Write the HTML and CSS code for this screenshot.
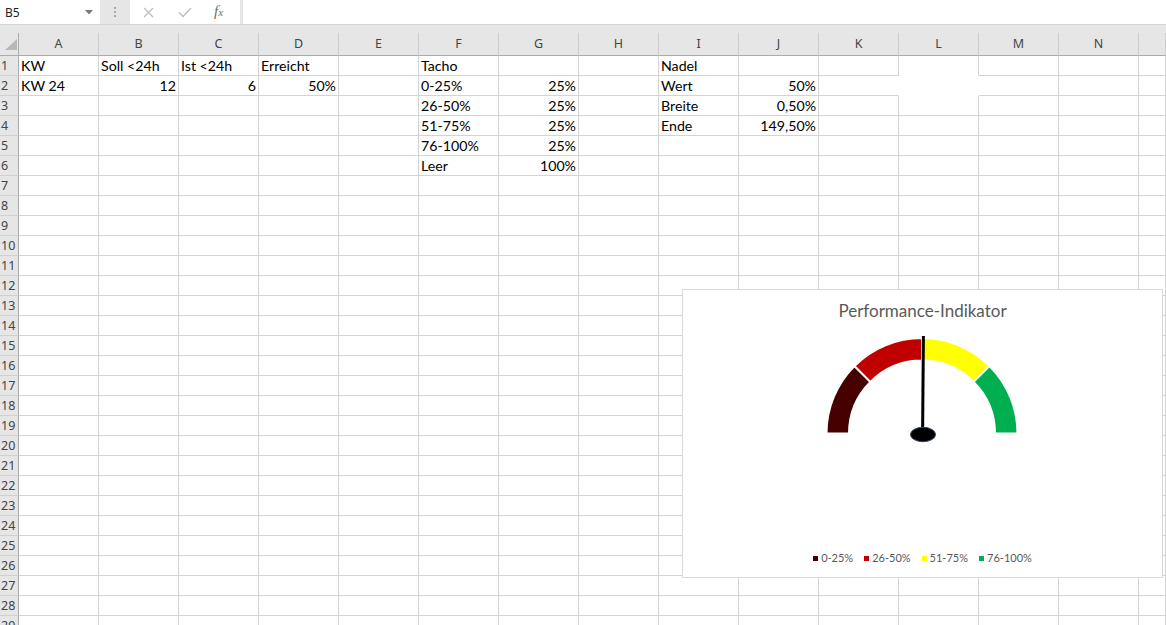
FILE: index.html
```html
<!DOCTYPE html>
<html lang="de">
<head>
<meta charset="utf-8">
<title>Performance-Indikator</title>
<link rel="stylesheet" href="styles.css">
</head>
<body>
<div class="app">
  <div class="fbar">
    <div class="namebox"><span>B5</span><svg class="caret" width="8" height="5" viewBox="0 0 8 5"><path d="M0 0H8L4 4.5Z"/></svg></div>
    <div class="grip"><i></i><i></i><i></i></div>
    <div class="fbtns">
      <svg class="ico ico-x" width="11" height="11" viewBox="0 0 11 11"><path d="M1 1L10 10M10 1L1 10"/></svg>
      <svg class="ico ico-ok" width="14" height="11" viewBox="0 0 14 11"><path d="M1 5.5L5 9.5L13 1"/></svg>
      <span class="fx"><i>f</i><i class="x">x</i></span>
    </div>
    <div class="finput"></div>
  </div>
  <div class="strip"></div>
  <div class="sheet">
    <div class="row head"><span class="corner"><svg width="19" height="22" viewBox="0 0 19 22"><path d="M5 17H17V6Z"/></svg></span><span>A</span><span>B</span><span>C</span><span>D</span><span>E</span><span>F</span><span>G</span><span>H</span><span>I</span><span>J</span><span>K</span><span>L</span><span>M</span><span>N</span><span></span></div>
    <div class="row"><span>1</span><span>KW</span><span>Soll &lt;24h</span><span>Ist &lt;24h</span><span>Erreicht</span><span></span><span>Tacho</span><span></span><span></span><span>Nadel</span><span></span><span></span><span class="nb"></span><span></span><span></span><span></span></div>
    <div class="row"><span>2</span><span>KW 24</span><span class="n">12</span><span class="n">6</span><span class="n">50%</span><span></span><span>0-25%</span><span class="n">25%</span><span></span><span>Wert</span><span class="n">50%</span><span class="nr"></span><span class="nr nb"></span><span></span><span></span><span></span></div>
    <div class="row"><span>3</span><span></span><span></span><span></span><span></span><span></span><span>26-50%</span><span class="n">25%</span><span></span><span>Breite</span><span class="n">0,50%</span><span></span><span></span><span></span><span></span><span></span></div>
    <div class="row"><span>4</span><span></span><span></span><span></span><span></span><span></span><span>51-75%</span><span class="n">25%</span><span></span><span>Ende</span><span class="n">149,50%</span><span></span><span></span><span></span><span></span><span></span></div>
    <div class="row"><span>5</span><span></span><span></span><span></span><span></span><span></span><span>76-100%</span><span class="n">25%</span><span></span><span></span><span></span><span></span><span></span><span></span><span></span><span></span></div>
    <div class="row"><span>6</span><span></span><span></span><span></span><span></span><span></span><span>Leer</span><span class="n">100%</span><span></span><span></span><span></span><span></span><span></span><span></span><span></span><span></span></div>
    <div class="row"><span>7</span><span></span><span></span><span></span><span></span><span></span><span></span><span></span><span></span><span></span><span></span><span></span><span></span><span></span><span></span><span></span></div>
    <div class="row"><span>8</span><span></span><span></span><span></span><span></span><span></span><span></span><span></span><span></span><span></span><span></span><span></span><span></span><span></span><span></span><span></span></div>
    <div class="row"><span>9</span><span></span><span></span><span></span><span></span><span></span><span></span><span></span><span></span><span></span><span></span><span></span><span></span><span></span><span></span><span></span></div>
    <div class="row"><span>10</span><span></span><span></span><span></span><span></span><span></span><span></span><span></span><span></span><span></span><span></span><span></span><span></span><span></span><span></span><span></span></div>
    <div class="row"><span>11</span><span></span><span></span><span></span><span></span><span></span><span></span><span></span><span></span><span></span><span></span><span></span><span></span><span></span><span></span><span></span></div>
    <div class="row"><span>12</span><span></span><span></span><span></span><span></span><span></span><span></span><span></span><span></span><span></span><span></span><span></span><span></span><span></span><span></span><span></span></div>
    <div class="row"><span>13</span><span></span><span></span><span></span><span></span><span></span><span></span><span></span><span></span><span></span><span></span><span></span><span></span><span></span><span></span><span></span></div>
    <div class="row"><span>14</span><span></span><span></span><span></span><span></span><span></span><span></span><span></span><span></span><span></span><span></span><span></span><span></span><span></span><span></span><span></span></div>
    <div class="row"><span>15</span><span></span><span></span><span></span><span></span><span></span><span></span><span></span><span></span><span></span><span></span><span></span><span></span><span></span><span></span><span></span></div>
    <div class="row"><span>16</span><span></span><span></span><span></span><span></span><span></span><span></span><span></span><span></span><span></span><span></span><span></span><span></span><span></span><span></span><span></span></div>
    <div class="row"><span>17</span><span></span><span></span><span></span><span></span><span></span><span></span><span></span><span></span><span></span><span></span><span></span><span></span><span></span><span></span><span></span></div>
    <div class="row"><span>18</span><span></span><span></span><span></span><span></span><span></span><span></span><span></span><span></span><span></span><span></span><span></span><span></span><span></span><span></span><span></span></div>
    <div class="row"><span>19</span><span></span><span></span><span></span><span></span><span></span><span></span><span></span><span></span><span></span><span></span><span></span><span></span><span></span><span></span><span></span></div>
    <div class="row"><span>20</span><span></span><span></span><span></span><span></span><span></span><span></span><span></span><span></span><span></span><span></span><span></span><span></span><span></span><span></span><span></span></div>
    <div class="row"><span>21</span><span></span><span></span><span></span><span></span><span></span><span></span><span></span><span></span><span></span><span></span><span></span><span></span><span></span><span></span><span></span></div>
    <div class="row"><span>22</span><span></span><span></span><span></span><span></span><span></span><span></span><span></span><span></span><span></span><span></span><span></span><span></span><span></span><span></span><span></span></div>
    <div class="row"><span>23</span><span></span><span></span><span></span><span></span><span></span><span></span><span></span><span></span><span></span><span></span><span></span><span></span><span></span><span></span><span></span></div>
    <div class="row"><span>24</span><span></span><span></span><span></span><span></span><span></span><span></span><span></span><span></span><span></span><span></span><span></span><span></span><span></span><span></span><span></span></div>
    <div class="row"><span>25</span><span></span><span></span><span></span><span></span><span></span><span></span><span></span><span></span><span></span><span></span><span></span><span></span><span></span><span></span><span></span></div>
    <div class="row"><span>26</span><span></span><span></span><span></span><span></span><span></span><span></span><span></span><span></span><span></span><span></span><span></span><span></span><span></span><span></span><span></span></div>
    <div class="row"><span>27</span><span></span><span></span><span></span><span></span><span></span><span></span><span></span><span></span><span></span><span></span><span></span><span></span><span></span><span></span><span></span></div>
    <div class="row"><span>28</span><span></span><span></span><span></span><span></span><span></span><span></span><span></span><span></span><span></span><span></span><span></span><span></span><span></span><span></span><span></span></div>
    <div class="row"><span>29</span><span></span><span></span><span></span><span></span><span></span><span></span><span></span><span></span><span></span><span></span><span></span><span></span><span></span><span></span><span></span></div>
  </div>
  <div class="chart">
    <div class="chart-title">Performance-Indikator</div>
    <svg class="gauge" width="479" height="115" viewBox="0 0 479 115">
      <g stroke="#fff" stroke-width="2" stroke-linejoin="miter">
        <path fill="#470000" d="M143.5 103.5A95.5 95.5 0 0 1 171.47 35.97L187.38 51.88A73 73 0 0 0 166 103.5Z"/>
        <path fill="#c00000" d="M171.47 35.97A95.5 95.5 0 0 1 239 8L239 30.5A73 73 0 0 0 187.38 51.88Z"/>
        <path fill="#ffff00" d="M239 8A95.5 95.5 0 0 1 306.53 35.97L290.62 51.88A73 73 0 0 0 239 30.5Z"/>
        <path fill="#00b050" d="M306.53 35.97A95.5 95.5 0 0 1 334.5 103.5L312 103.5A73 73 0 0 0 290.62 51.88Z"/>
      </g>
      <path d="M239.6 104L240.4 6" stroke="#000" stroke-width="3"/>
      <ellipse cx="240" cy="104.5" rx="12.5" ry="7.2" fill="#000" stroke="#2d4560" stroke-width="1"/>
    </svg>
    <div class="legend">
      <div class="legend-item"><i class="sw sw1"></i><span>0-25%</span></div>
      <div class="legend-item"><i class="sw sw2"></i><span>26-50%</span></div>
      <div class="legend-item"><i class="sw sw3"></i><span>51-75%</span></div>
      <div class="legend-item"><i class="sw sw4"></i><span>76-100%</span></div>
    </div>
  </div>
</div>
</body>
</html>
```
FILE: styles.css
```css
* { box-sizing: border-box; }
html, body { margin: 0; padding: 0; }
body { width: 1166px; height: 625px; overflow: hidden; background: #fff; }

.app {
  position: relative;
  width: 1166px;
  height: 625px;
  overflow: hidden;
  background: #e6e6e6;
  font-family: Lato, "Liberation Sans", sans-serif;
}

/* formula bar */
.fbar { display: flex; height: 24px; background: #e6e6e6; }
.namebox {
  width: 100px;
  background: #fff;
  display: flex;
  align-items: center;
  justify-content: space-between;
  padding: 0 7px 0 5px;
  font: 12px "Noto Sans", sans-serif;
  color: #222;
}
.caret { fill: #7a7a7a; }
.grip {
  width: 30px;
  display: flex;
  flex-direction: column;
  align-items: center;
  justify-content: center;
  gap: 2px;
}
.grip i { display: block; width: 2px; height: 2px; background: #a8a8a8; }
.fbtns {
  width: 110px;
  background: #fff;
  display: flex;
  align-items: center;
  padding-left: 13px;
}
.ico { fill: none; stroke: #bdbdbd; stroke-width: 1.3; }
.ico-x { margin-right: 24px; }
.ico-ok { margin-right: 22px; }
.fx { font-family: "Liberation Serif", serif; color: #6a6a6a; font-size: 15px; line-height: 15px; }
.fx i { font-style: italic; }
.fx .x { font-size: 11px; }
.finput { flex: 1; margin-left: 3px; background: #fff; }
.strip { height: 9px; border-top: 1px solid #d6d6d6; background: #e6e6e6; }

/* sheet grid */
.sheet { display: flex; flex-direction: column; background: #fff; }
.row {
  display: grid;
  grid-template-columns: 19px repeat(14, 80px) 27px;
  height: 20px;
  flex: none;
}
.row > span {
  border-right: 1px solid #d4d4d4;
  border-bottom: 1px solid #d4d4d4;
  font-size: 14.2px;
  line-height: 19px;
  padding: 0 2px 0 2px;
  white-space: nowrap;
  overflow: hidden;
  color: #000;
}
.row > span:first-child {
  background: #e6e6e6;
  border-right-color: #ababab;
  border-bottom-color: #d0d0d0;
  font: 12.5px/19px "Noto Sans", sans-serif;
  color: #444;
  padding: 0 0 0 1px;
}
.row > span.n { text-align: right; }
.row > span.nb { border-bottom-color: transparent; }
.row > span.nr { border-right-color: transparent; }

.head { height: 23px; background: #e6e6e6; }
.head > span {
  background: #e6e6e6;
  text-align: center;
  font: 12.5px/22px "Noto Sans", sans-serif;
  color: #444;
  border-bottom-color: #ababab;
  border-right-color: #cdcdcd;
}
.head > span.corner { padding: 0; border-bottom-color: #ababab; }
.corner svg { display: block; fill: #b8b8b8; }

/* chart */
.chart {
  position: absolute;
  left: 682px;
  top: 289px;
  width: 481px;
  height: 289px;
  border: 1px solid #d9d9d9;
  background: #fff;
  display: flex;
  flex-direction: column;
  align-items: center;
}
.chart-title { margin-top: 10px; font-size: 17px; line-height: 22px; color: #595959; }
.gauge { display: block; margin-top: 8px; }
.legend {
  margin-top: auto;
  margin-bottom: 11px;
  display: flex;
  gap: 11px;
  font-size: 11px;
  line-height: 16px;
  color: #595959;
}
.legend-item { display: flex; align-items: center; gap: 3px; }
.sw { display: block; width: 5px; height: 5px; }
.sw1 { background: #470000; }
.sw2 { background: #c00000; }
.sw3 { background: #ffff00; }
.sw4 { background: #00b050; }
```
